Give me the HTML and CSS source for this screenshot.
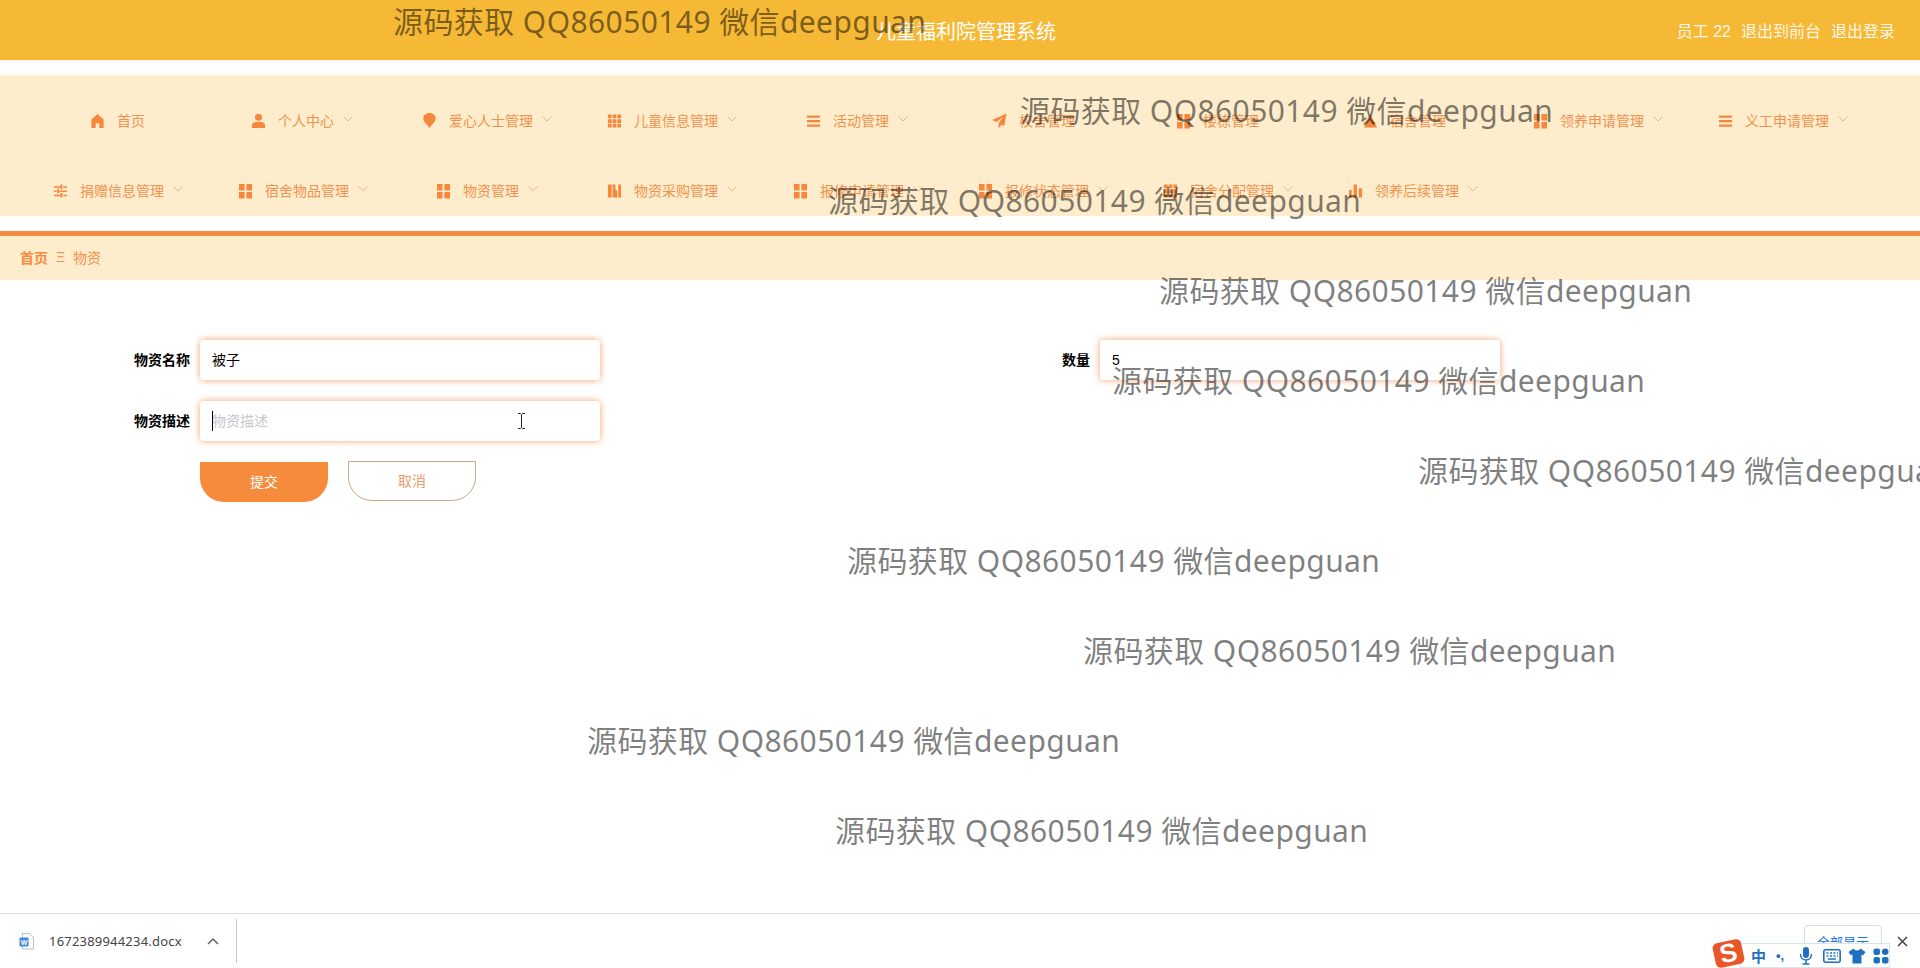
FILE: index.html
```html
<!DOCTYPE html>
<html lang="en">
  <head>
    <meta charset="UTF-8" />
    <title>儿童福利院管理系统</title>
    <link rel="stylesheet" href="styles.css">
  </head>
  <body>
    <svg class="sprite" width="0" height="0">
      <symbol id="i-home" viewBox="0 0 16 16"><path d="M8 0.500 L14.500 6.500 V15.500 H10 V10.500 H6 V15.500 H1.500 V6.500 Z"/></symbol>
      <symbol id="i-user" viewBox="0 0 16 16"><circle cx="8" cy="4" r="3.800"/><path d="M1 15.500 V12.500 C1 10 3.500 8.800 8 8.800 C12.500 8.800 15 10 15 12.500 V15.500 Z"/></symbol>
      <symbol id="i-bulb" viewBox="0 0 16 18"><path d="M8 0 C12.500 0 15 3 15 6.500 C15 10.500 10.500 12 8 17.500 C5.500 12 1 10.500 1 6.500 C1 3 3.500 0 8 0 Z"/></symbol>
      <symbol id="i-grid3" viewBox="0 0 16 16"><path d="M1 1h4v4h-4zM6 1h4v4h-4zM11 1h4v4h-4zM1 6h4v4h-4zM6 6h4v4h-4zM11 6h4v4h-4zM1 11h4v4h-4zM6 11h4v4h-4zM11 11h4v4h-4z"/></symbol>
      <symbol id="i-list" viewBox="0 0 16 16"><path d="M1 2h14v2.500h-14zM1 6.800h14v2.500h-14zM1 11.600h14v2.500h-14z"/></symbol>
      <symbol id="i-plane" viewBox="0 0 16 16"><path d="M15.500 0 L0 7 L5 9 L12 3.500 L7 10 V16 L10 12 L13 13.500 Z"/></symbol>
      <symbol id="i-grid2" viewBox="0 0 16 16"><path d="M1 0.500h6v7h-6zM9 0.500h6v7h-6zM1 9h6v7h-6zM9 9h6v7h-6z"/></symbol>
      <symbol id="i-tune" viewBox="0 0 16 16"><path d="M1 3h7v1.500h-7zM11 3h4v1.500h-4zM8 1h2v5h-2zM1 7.500h3v1.500h-3zM7 7.500h8v1.500h-8zM4.500 5.500h2v5h-2zM1 12h7v1.500h-7zM11 12h4v1.500h-4zM8 10h2v5h-2z"/></symbol>
      <symbol id="i-bag" viewBox="0 0 16 16"><path d="M1 1h4v14h-4zM6 1h3l0 5 2 2v7h-5zM12 1h3v14h-3z"/></symbol>
      <symbol id="i-bars" viewBox="0 0 16 16"><path d="M1 7h3v8h-3zM6 1h3.500v14h-3.500zM11.500 5h3.500v10h-3.500z"/></symbol>
      <symbol id="i-tri" viewBox="0 0 16 16"><path d="M8 1 L15 15 H1 Z"/></symbol>
      <symbol id="i-down" viewBox="0 0 10 6"><path d="M0.500 0.500 L5 5 L9.500 0.500" fill="none" stroke="currentColor" stroke-width="1"/></symbol>
    </svg>

    <header class="topbar">
      <div class="topbar-title">儿童福利院管理系统</div>
      <div class="topbar-user">
        <span>员工 22</span>
        <span>退出到前台</span>
        <span>退出登录</span>
      </div>
    </header>

    <nav class="menu">
      <ul class="menu-row menu-row-a">
        <li><svg class="menu-icon"><use href="#i-home"/></svg><span>首页</span></li>
        <li><svg class="menu-icon"><use href="#i-user"/></svg><span>个人中心</span><svg class="menu-down"><use href="#i-down"/></svg></li>
        <li><svg class="menu-icon"><use href="#i-bulb"/></svg><span>爱心人士管理</span><svg class="menu-down"><use href="#i-down"/></svg></li>
        <li><svg class="menu-icon"><use href="#i-grid3"/></svg><span>儿童信息管理</span><svg class="menu-down"><use href="#i-down"/></svg></li>
        <li><svg class="menu-icon"><use href="#i-list"/></svg><span>活动管理</span><svg class="menu-down"><use href="#i-down"/></svg></li>
        <li><svg class="menu-icon"><use href="#i-plane"/></svg><span>校舍管理</span></li>
        <li><svg class="menu-icon"><use href="#i-grid2"/></svg><span>楼栋管理</span></li>
        <li><svg class="menu-icon"><use href="#i-tri"/></svg><span>宿舍管理</span></li>
        <li><svg class="menu-icon"><use href="#i-grid2"/></svg><span>领养申请管理</span><svg class="menu-down"><use href="#i-down"/></svg></li>
        <li><svg class="menu-icon"><use href="#i-list"/></svg><span>义工申请管理</span><svg class="menu-down"><use href="#i-down"/></svg></li>
      </ul>
      <ul class="menu-row menu-row-b">
        <li><svg class="menu-icon"><use href="#i-tune"/></svg><span>捐赠信息管理</span><svg class="menu-down"><use href="#i-down"/></svg></li>
        <li><svg class="menu-icon"><use href="#i-grid2"/></svg><span>宿舍物品管理</span><svg class="menu-down"><use href="#i-down"/></svg></li>
        <li><svg class="menu-icon"><use href="#i-grid2"/></svg><span>物资管理</span><svg class="menu-down"><use href="#i-down"/></svg></li>
        <li><svg class="menu-icon"><use href="#i-bag"/></svg><span>物资采购管理</span><svg class="menu-down"><use href="#i-down"/></svg></li>
        <li><svg class="menu-icon"><use href="#i-grid2"/></svg><span>报修申请管理</span><svg class="menu-down"><use href="#i-down"/></svg></li>
        <li><svg class="menu-icon"><use href="#i-grid2"/></svg><span>报修状态管理</span><svg class="menu-down"><use href="#i-down"/></svg></li>
        <li><svg class="menu-icon"><use href="#i-grid3"/></svg><span>宿舍分配管理</span><svg class="menu-down"><use href="#i-down"/></svg></li>
        <li><svg class="menu-icon"><use href="#i-bars"/></svg><span>领养后续管理</span><svg class="menu-down"><use href="#i-down"/></svg></li>
      </ul>
    </nav>

    <div class="crumbs">
      <span class="crumbs-home">首页</span>
      <span class="crumbs-sep">Ξ</span>
      <span>物资</span>
    </div>

    <main class="content">
      <form class="form">
        <div class="field field-name">
          <label>物资名称</label>
          <input type="text" value="被子" />
        </div>
        <div class="field">
          <label>数量</label>
          <input type="text" value="5" />
        </div>
        <div class="field">
          <label>物资描述</label>
          <div class="input-wrap">
            <input type="text" placeholder="物资描述" />
            <i class="caret"></i>
            <svg class="ibeam" width="9" height="16" viewBox="0 0 9 16"><path d="M1 0.500h2.500l1 1 1-1h2.500M4.500 1.500v13M1 15.500h2.500l1-1 1 1h2.500" fill="none" stroke="#222" stroke-width="1"/></svg>
          </div>
        </div>
        <div class="actions">
          <button type="button" class="btn btn-submit">提交</button>
          <button type="button" class="btn btn-cancel">取消</button>
        </div>
      </form>
    </main>

    <footer class="downloads">
      <div class="download-item">
        <svg class="doc-icon" width="15" height="17" viewBox="0 0 15 17">
          <path d="M3.500 0.500h7l4 4v11.500h-11z" fill="#fff" stroke="#b4c2d6"/>
          <rect x="0.500" y="4.500" width="9" height="9" rx="1" fill="#3f86d6"/>
          <text x="5" y="12" class="doc-letter">W</text>
        </svg>
        <span class="download-name">1672389944234.docx</span>
        <svg class="download-up" width="12" height="8" viewBox="0 0 12 8"><path d="M1 7 L6 2 L11 7" fill="none" stroke="#5f6368" stroke-width="1.500"/></svg>
      </div>
      <div class="download-line"></div>
      <div class="download-all">全部显示</div>
      <svg class="download-close" width="11" height="11" viewBox="0 0 11 11"><path d="M1 1 L10 10 M10 1 L1 10" stroke="#444" stroke-width="1.500"/></svg>
    </footer>

    <div class="ime">
      <div class="ime-logo">S</div>
      <span class="ime-zh">中</span>
      <span class="ime-punct">•,</span>
      <svg width="14" height="18" viewBox="0 0 14 18"><rect x="4" y="0" width="6" height="11" rx="3" fill="#1f6fc0"/><path d="M1.500 7 C1.500 15 12.500 15 12.500 7 M7 13 V17 M3.500 17 H10.500" fill="none" stroke="#1f6fc0" stroke-width="1.500"/></svg>
      <svg width="18" height="14" viewBox="0 0 18 14"><rect x="0.800" y="0.800" width="16.400" height="12.400" rx="2" fill="none" stroke="#1f6fc0" stroke-width="1.600"/><path d="M3.500 4h2M7 4h2M10.500 4h2M14 4h1M3.500 7h2M7 7h2M10.500 7h2M14 7h1M5 10h8" stroke="#1f6fc0" stroke-width="1.400"/></svg>
      <svg class="ime-tight" width="18" height="16" viewBox="0 0 18 16"><path d="M5.500 0.500 L0.500 4 L3 7.500 L4.500 6.500 V15.500 H13.500 V6.500 L15 7.500 L17.500 4 L12.500 0.500 C11.500 3 6.500 3 5.500 0.500 Z" fill="#1f6fc0"/></svg>
      <svg class="ime-tight" width="16" height="16" viewBox="0 0 16 16"><g fill="#1f6fc0"><rect x="0.500" y="0.500" width="6.500" height="6.500" rx="2"/><rect x="9" y="0.500" width="6.500" height="6.500" rx="3.250"/><rect x="0.500" y="9" width="6.500" height="6.500" rx="2"/><rect x="9" y="9" width="6.500" height="6.500" rx="2"/></g></svg>
    </div>

    <div class="watermarks">
      <span class="wm wm-1">源码获取 QQ86050149 微信deepguan</span>
      <span class="wm wm-2">源码获取 QQ86050149 微信deepguan</span>
      <span class="wm wm-3">源码获取 QQ86050149 微信deepguan</span>
      <span class="wm wm-4">源码获取 QQ86050149 微信deepguan</span>
      <span class="wm wm-5">源码获取 QQ86050149 微信deepguan</span>
      <span class="wm wm-6">源码获取 QQ86050149 微信deepguan</span>
      <span class="wm wm-7">源码获取 QQ86050149 微信deepguan</span>
      <span class="wm wm-8">源码获取 QQ86050149 微信deepguan</span>
      <span class="wm wm-9">源码获取 QQ86050149 微信deepguan</span>
      <span class="wm wm-10">源码获取 QQ86050149 微信deepguan</span>
    </div>
  </body>
</html>
```

FILE: styles.css
```css
html,
body {
  height: 100%;
}
body {
  margin: 0;
  padding: 0;
  display: flex;
  flex-direction: column;
  overflow: hidden;
  position: relative;
  background: #ffffff;
  color: #000000;
  font-family: "Liberation Sans", "Noto Sans CJK SC", sans-serif;
}
.sprite {
  position: absolute;
}

/* top bar */
.topbar {
  flex: none;
  height: 60px;
  position: relative;
  display: flex;
  align-items: center;
  justify-content: center;
  background: #f6b936;
  color: #ffffff;
  box-shadow: 0 1px 4px rgba(0, 0, 0, 0.08);
}
.topbar-title {
  margin-left: 12px;
  font-size: 20px;
}
.topbar-user {
  position: absolute;
  right: 25px;
  top: 0;
  bottom: 0;
  display: flex;
  align-items: center;
  gap: 10px;
  font-size: 16px;
  color: rgba(255, 255, 255, 0.9);
}

/* menu */
.menu {
  flex: none;
  height: 141px;
  margin-top: 15px;
  background: #feedcc;
  color: #f0924e;
  font-size: 14px;
}
.menu-row {
  list-style: none;
  margin: 0;
  display: grid;
  height: 70px;
  align-items: center;
}
.menu-row-a {
  padding: 11px 0 0 90px;
  height: 70px;
  box-sizing: content-box;
  grid-template-columns: 161px 171px 185px 199px 186px 184px 187px 170px 185px auto;
}
.menu-row-b {
  padding: 0 0 0 53px;
  grid-template-columns: 185px 198px 171px 186px 185px 185px 185px auto;
}
.menu-row li {
  display: flex;
  align-items: center;
}
.menu-row li span {
  margin-bottom: 2px;
}
.menu-icon {
  flex: none;
  width: 15px;
  height: 16px;
  margin-right: 12px;
  fill: #f5883d;
}
.menu-down {
  flex: none;
  width: 10px;
  height: 6px;
  margin: -4px 0 0 9px;
  color: #f0b583;
}

/* breadcrumb */
.crumbs {
  flex: none;
  margin-top: 15px;
  border-top: 5px solid #f58b40;
  display: flex;
  align-items: center;
  padding: 0 0 2px 20px;
  box-sizing: content-box;
  height: 42px;
  background: #feedcc;
  color: #f0924e;
  font-size: 14px;
}
.crumbs-home {
  font-weight: bold;
  color: #f58b40;
}
.crumbs-sep {
  width: 25px;
  text-align: center;
  font-size: 14px;
}

/* form */
.content {
  flex: 1;
  padding: 60px 0 0 110px;
}
.form {
  display: grid;
  grid-template-columns: 900px 500px;
  row-gap: 21px;
}
.field {
  display: flex;
  align-items: center;
}
.field label {
  width: 80px;
  margin: 0 10px 2px 0;
  text-align: right;
  font-size: 14px;
  font-weight: bold;
}
.field input {
  width: 400px;
  height: 40px;
  box-sizing: border-box;
  padding: 0 12px;
  border: none;
  border-radius: 4px;
  outline: none;
  background: #ffffff;
  box-shadow: 0 0 7px rgba(240, 130, 60, 0.75);
  color: #000000;
  font-family: inherit;
  font-size: 14px;
}
.field-name input {
  padding-bottom: 2px;
}
.field input::placeholder {
  color: #c4c6cc;
}
.input-wrap {
  position: relative;
  display: flex;
}
.caret {
  position: absolute;
  left: 12px;
  top: 10px;
  width: 1px;
  height: 20px;
  background: #000000;
}
.ibeam {
  position: absolute;
  left: 317px;
  top: 12px;
}
.actions {
  grid-column: 1 / 3;
  display: flex;
  gap: 20px;
  padding-left: 90px;
}
.btn {
  width: 128px;
  height: 40px;
  padding: 0 0 2px;
  font-family: inherit;
  font-size: 14px;
  border-radius: 0 0 24px 24px;
}
.btn-submit {
  border: none;
  background: #f58b3b;
  color: #ffffff;
}
.btn-cancel {
  margin-top: -1px;
  border: 1px solid #cfa67f;
  background: #ffffff;
  color: #ec9b6b;
}

/* download bar */
.downloads {
  flex: none;
  height: 55px;
  box-sizing: border-box;
  position: relative;
  display: flex;
  align-items: center;
  border-top: 1px solid #dcdcdc;
  background: #ffffff;
  color: #444444;
}
.download-item {
  display: flex;
  align-items: center;
  width: 236px;
  padding-left: 19px;
  box-sizing: border-box;
}
.doc-letter {
  font-size: 7px;
  font-weight: bold;
  fill: #ffffff;
  text-anchor: middle;
}
.download-name {
  margin-left: 15px;
  font-family: "Noto Sans", sans-serif;
  font-size: 13px;
  letter-spacing: 0.2px;
}
.download-up {
  margin-left: 25px;
}
.download-line {
  width: 1px;
  height: 44px;
  background: #c8c8c8;
}
.download-all {
  position: absolute;
  left: 1804px;
  top: 11px;
  width: 78px;
  height: 36px;
  box-sizing: border-box;
  padding-top: 6px;
  border: 1px solid #dadce0;
  border-radius: 4px;
  color: #1a73e8;
  font-size: 13px;
  text-align: center;
}
.download-close {
  position: absolute;
  left: 1897px;
  top: 22px;
}

/* input method toolbar */
.ime {
  position: absolute;
  left: 1740px;
  top: 943px;
  width: 150px;
  height: 25px;
  box-sizing: border-box;
  display: flex;
  align-items: center;
  gap: 10px;
  padding-left: 10px;
  border: 1px solid #d8e4ee;
  background: #ffffff;
}
.ime-logo {
  position: absolute;
  left: -27px;
  top: -3px;
  width: 29px;
  height: 25px;
  border-radius: 5px;
  background: #e8562a;
  color: #ffffff;
  font-size: 26px;
  font-weight: bold;
  line-height: 25px;
  text-align: center;
  transform: rotate(-12deg);
}
.ime-zh {
  color: #1f6fc0;
  font-size: 15px;
  font-weight: bold;
}
.ime-punct {
  margin-right: 5px;
  color: #1f6fc0;
  font-size: 13px;
  font-weight: bold;
}
.ime-tight {
  margin-left: -3px;
}

/* watermark text over the whole page */
.watermarks {
  position: absolute;
  inset: 0;
  overflow: hidden;
  pointer-events: none;
}
.wm {
  position: absolute;
  white-space: nowrap;
  color: rgba(0, 0, 0, 0.5);
  font-family: "Noto Sans", "Noto Sans CJK SC", sans-serif;
  font-size: 30px;
  letter-spacing: 0.4px;
  line-height: 40px;
}
.wm-1 { left: 393px; top: 2px; }
.wm-2 { left: 1020px; top: 91px; }
.wm-3 { left: 828px; top: 181px; }
.wm-4 { left: 1159px; top: 271px; }
.wm-5 { left: 1112px; top: 361px; }
.wm-6 { left: 1418px; top: 451px; }
.wm-7 { left: 847px; top: 541px; }
.wm-8 { left: 1083px; top: 631px; }
.wm-9 { left: 587px; top: 721px; }
.wm-10 { left: 835px; top: 811px; }
```
